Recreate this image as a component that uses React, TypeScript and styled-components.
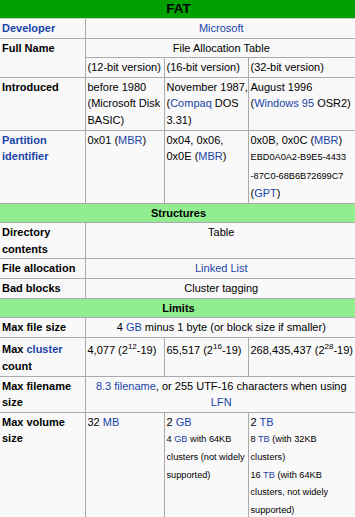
import React from "react";
import styled, { createGlobalStyle } from "styled-components";

const GlobalStyle = createGlobalStyle`
    html, body {
        margin: 0;
        padding: 0;
        overflow: hidden;
        background: #ffffff;
    }
`;

/* ------------------------------ Styled UI ------------------------------- */
const Infobox = styled.table`
    width: 357px;
    table-layout: fixed;
    border-collapse: collapse;
    border-style: hidden;
    background: #f9f9f9;
    color: #000;
    font-family: "Liberation Sans", Arial, sans-serif;
    font-size: 11px;
    line-height: 16.6px;

    th, td {
        border: 1px solid #aaa;
        padding: 1px 2px;
        vertical-align: baseline;
    }
`;

const TitleCell = styled.th`
    && {
        background: #00a000;
        border-color: #b8dcb8;
        padding: 0 2px;
        font-size: 13.5px;
        line-height: 18px;
        text-align: center;
    }
`;

const SectionCell = styled.th`
    && {
        background: #90ee90;
        text-align: center;
    }
`;

const LabelCell = styled.th`
    text-align: left;
    font-weight: bold;
`;

const DataCell = styled.td<{ $center?: boolean }>`
    text-align: ${({ $center }) => ($center ? "center" : "left")};
    white-space: nowrap;
`;

const Link = styled.span`
    color: #1a44a8;
`;

const Small = styled.span`
    font-size: 9.2px;
`;

const GuidLine = styled.span`
    display: block;
    font-size: 9.2px;
    line-height: 18.4px;
`;

const Sup = styled.sup`
    font-size: 8px;
`;

const App: React.FC = () => {
    return (
        <>
            <GlobalStyle />
            <Infobox>
                <colgroup>
                    <col style={{ width: 85 }} />
                    <col style={{ width: 79 }} />
                    <col style={{ width: 84 }} />
                    <col style={{ width: 109 }} />
                </colgroup>
                <tbody>
                    <tr>
                        <TitleCell colSpan={4}>FAT</TitleCell>
                    </tr>
                    <tr>
                        <LabelCell><Link>Developer</Link></LabelCell>
                        <DataCell colSpan={3} $center><Link>Microsoft</Link></DataCell>
                    </tr>
                    <tr>
                        <LabelCell rowSpan={2}>Full Name</LabelCell>
                        <DataCell colSpan={3} $center>File Allocation Table</DataCell>
                    </tr>
                    <tr>
                        <DataCell>(12-bit version)</DataCell>
                        <DataCell>(16-bit version)</DataCell>
                        <DataCell>(32-bit version)</DataCell>
                    </tr>
                    <tr>
                        <LabelCell>Introduced</LabelCell>
                        <DataCell>before 1980<br />(Microsoft Disk<br />BASIC)</DataCell>
                        <DataCell>November 1987,<br />(<Link>Compaq</Link> DOS<br />3.31)</DataCell>
                        <DataCell>August 1996<br />(<Link>Windows 95</Link> OSR2)</DataCell>
                    </tr>
                    <tr>
                        <LabelCell><Link>Partition identifier</Link></LabelCell>
                        <DataCell>0x01 (<Link>MBR</Link>)</DataCell>
                        <DataCell>0x04, 0x06,<br />0x0E (<Link>MBR</Link>)</DataCell>
                        <DataCell>
                            0x0B, 0x0C (<Link>MBR</Link>)
                            <GuidLine>EBD0A0A2-B9E5-4433</GuidLine>
                            <GuidLine>-87C0-68B6B72699C7</GuidLine>
                            (<Link>GPT</Link>)
                        </DataCell>
                    </tr>
                    <tr>
                        <SectionCell colSpan={4}>Structures</SectionCell>
                    </tr>
                    <tr>
                        <LabelCell>Directory contents</LabelCell>
                        <DataCell colSpan={3} $center>Table</DataCell>
                    </tr>
                    <tr>
                        <LabelCell>File allocation</LabelCell>
                        <DataCell colSpan={3} $center><Link>Linked List</Link></DataCell>
                    </tr>
                    <tr>
                        <LabelCell>Bad blocks</LabelCell>
                        <DataCell colSpan={3} $center>Cluster tagging</DataCell>
                    </tr>
                    <tr>
                        <SectionCell colSpan={4}>Limits</SectionCell>
                    </tr>
                    <tr>
                        <LabelCell>Max file size</LabelCell>
                        <DataCell colSpan={3} $center>4 <Link>GB</Link> minus 1 byte (or block size if smaller)</DataCell>
                    </tr>
                    <tr>
                        <LabelCell>Max <Link>cluster</Link> count</LabelCell>
                        <DataCell>4,077 (2<Sup>12</Sup>-19)</DataCell>
                        <DataCell>65,517 (2<Sup>16</Sup>-19)</DataCell>
                        <DataCell>268,435,437 (2<Sup>28</Sup>-19)</DataCell>
                    </tr>
                    <tr>
                        <LabelCell>Max filename size</LabelCell>
                        <DataCell colSpan={3} $center>
                            <Link>8.3 filename</Link>, or 255 UTF-16 characters when using<br /><Link>LFN</Link>
                        </DataCell>
                    </tr>
                    <tr>
                        <LabelCell>Max volume size</LabelCell>
                        <DataCell>32 <Link>MB</Link></DataCell>
                        <DataCell>
                            2 <Link>GB</Link><br />
                            <Small>4 <Link>GB</Link> with 64KB<br />clusters (not widely<br />supported)</Small>
                        </DataCell>
                        <DataCell>
                            2 <Link>TB</Link><br />
                            <Small>
                                8 <Link>TB</Link> (with 32KB<br />clusters)<br />
                                16 <Link>TB</Link> (with 64KB<br />clusters, not widely<br />supported)
                            </Small>
                        </DataCell>
                    </tr>
                    <tr>
                        <SectionCell colSpan={4} />
                    </tr>
                </tbody>
            </Infobox>
        </>
    );
};

export default App;
